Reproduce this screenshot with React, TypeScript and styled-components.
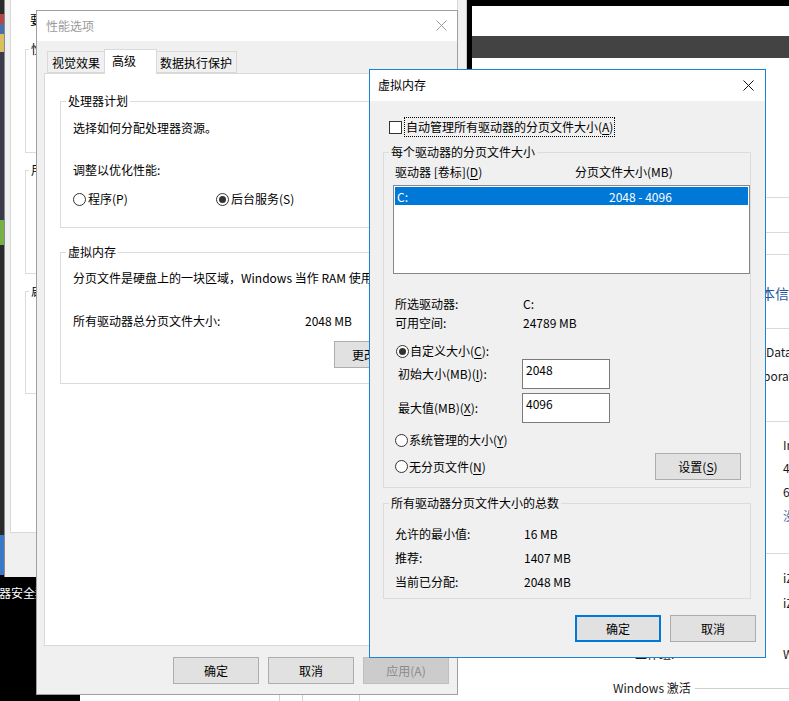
import styled, { createGlobalStyle } from 'styled-components'

const CloseIcon = ({ color }: { color: string }) => (
  <svg width="11" height="11" viewBox="0 0 11 11">
    <path d="M0.5 0.5 L10.5 10.5 M10.5 0.5 L0.5 10.5" stroke={color} strokeWidth="1" fill="none" />
  </svg>
)

const App = () => {
  return (
    <>
      <GlobalStyle />
      <Desktop>
        <ColorStrip />
        <DesktopLabel>器安全翔</DesktopLabel>

        {/* system properties window, mostly hidden */}
        <SysWindow>
          <SysPanel>
            <Line $mt={12} $indent={5}>要进行大多数更改，你必须作为管理员登录。</Line>
            <Group $bg="#fff" $pad="0 12px 95px" $mt={21}>
              <Legend $shift={-9}>性能</Legend>
            </Group>
            <Group $bg="#fff" $pad="0 12px 95px" $mt={17}>
              <Legend $shift={-9}>用户配置文件</Legend>
            </Group>
            <Group $bg="#fff" $pad="0 12px 94px" $mt={17}>
              <Legend $shift={-9}>启动和故障恢复</Legend>
            </Group>
          </SysPanel>
        </SysWindow>

        <BackWindow>
          <BackCell $w={200} />
          <BackCell $w={23} />
          <BackCell $w={57} />
        </BackWindow>

        {/* control panel "system" window */}
        <CpWindow>
          <CpBlackBar />
          <CpBlank />
          <CpDarkBar />
          <CpMain>
            <Sep $mt={139} />
            <Sep $mt={34} />
            <Sep $mt={21} />
            <CpHeading $mt={28} $indent={134}>基本信息</CpHeading>
            <Sep $mt={25} />
            <CpText $mt={15} $indent={153}>Datacenter</CpText>
            <CpText $mt={8} $indent={150}>poration。保留所有权利。</CpText>
            <Sep $mt={37} />
            <CpText $mt={15} $indent={22}>
              <Cell $w={148}>处理器:</Cell>Intel(R) Xeon(R) CPU E5-2682 v4 @ 2.50GHz
            </CpText>
            <CpText $mt={7} $indent={22}>
              <Cell $w={148}>已安装的内存(RAM):</Cell>4.00 GB
            </CpText>
            <CpText $mt={8} $indent={22}>
              <Cell $w={148}>系统类型:</Cell>64 位操作系统，基于 x64 的处理器
            </CpText>
            <CpText $mt={8} $indent={22} $muted>
              <Cell $w={148}>笔和触控:</Cell>没有可用于此显示器的笔或触控输入
            </CpText>
            <Sep $mt={29} />
            <CpText $mt={16} $indent={22}>
              <Cell $w={148}>计算机名:</Cell>iZ8vb5k2r1q9Z
            </CpText>
            <CpText $mt={9} $indent={22}>
              <Cell $w={148}>计算机全名:</Cell>iZ8vb5k2r1q9Z
            </CpText>
            <CpText $mt={35} $indent={22}>
              <Cell $w={148}>工作组:</Cell>WORKGROUP
            </CpText>
            <SectionTitle $mt={18}>
              Windows 激活
              <SectionRule />
            </SectionTitle>
          </CpMain>
        </CpWindow>

        {/* 性能选项 */}
        <PerfDialog>
          <TitleBar $h={30} $pl={9} $pr={10}>
            <TitleText $dim>性能选项</TitleText>
            <CloseIcon color="#9a9a9a" />
          </TitleBar>
          <PerfBody>
            <TabStrip>
              <Tab $w={58} $pl={4}>视觉效果</Tab>
              <Tab $w={53} $pl={7} $active>高级</Tab>
              <Tab $w={81} $pl={3}>数据执行保护</Tab>
            </TabStrip>
            <TabPanel>
              <Group $bg="#fff" $pad="0 12px 20px">
                <Legend $shift={-7}>处理器计划</Legend>
                <Line $mt={11}>选择如何分配处理器资源。</Line>
                <Line $mt={26}>调整以优化性能:</Line>
                <Line $mt={13}>
                  <Choice $w={143} $gap={2}>
                    <Radio />
                    <Caption>程序(P)</Caption>
                  </Choice>
                  <Choice $gap={2}>
                    <Radio $checked />
                    <Caption>后台服务(S)</Caption>
                  </Choice>
                </Line>
              </Group>
              <Group $bg="#fff" $pad="0 12px 15px" $mt={24}>
                <Legend $shift={-7}>虚拟内存</Legend>
                <Line $mt={10}>分页文件是硬盘上的一块区域，Windows 当作 RAM 使用它。</Line>
                <Line $mt={27}>
                  <Cell $w={232}>所有驱动器总分页文件大小:</Cell>2048 MB
                </Line>
                <ButtonRow $mt={12}>
                  <Button>更改(C)...</Button>
                </ButtonRow>
              </Group>
            </TabPanel>
            <ButtonRow $mt={11}>
              <Button>确定</Button>
              <Button>取消</Button>
              <Button $disabled>应用(A)</Button>
            </ButtonRow>
          </PerfBody>
        </PerfDialog>

        {/* 虚拟内存 */}
        <VmDialog>
          <TitleBar $h={31} $pl={8} $pr={11}>
            <TitleText>虚拟内存</TitleText>
            <CloseIcon color="#111" />
          </TitleBar>
          <VmBody>
            <AutoRow>
              <CheckBox />
              <FocusLabel>
                自动管理所有驱动器的分页文件大小(<u>A</u>)
              </FocusLabel>
            </AutoRow>

            <Group $bg="#f0f0f0" $pad="0 0 7px 11px" $mt={15} $mr={5}>
              <Legend $shift={-6}>每个驱动器的分页文件大小</Legend>
              <Line $mt={4}>
                <Cell $w={180}>
                  驱动器 [卷标](<u>D</u>)
                </Cell>
                分页文件大小(MB)
              </Line>
              <DriveList>
                <DriveRow>
                  <Cell $w={212}>C:</Cell>
                  2048 - 4096
                </DriveRow>
              </DriveList>
              <Line $mt={22}>
                <Cell $w={128}>所选驱动器:</Cell>C:
              </Line>
              <Line $mt={3}>
                <Cell $w={128}>可用空间:</Cell>24789 MB
              </Line>
              <Line $mt={12} $indent={1}>
                <Choice $gap={1}>
                  <Radio $checked />
                  <Caption>
                    自定义大小(<u>C</u>):
                  </Caption>
                </Choice>
              </Line>
              <Line $indent={3}>
                <Cell $w={124}>
                  初始大小(MB)(<u>I</u>):
                </Cell>
                <SizeBox>2048</SizeBox>
              </Line>
              <Line $mt={4} $indent={3}>
                <Cell $w={124}>
                  最大值(MB)(<u>X</u>):
                </Cell>
                <SizeBox>4096</SizeBox>
              </Line>
              <Line $mt={9}>
                <Choice $gap={1}>
                  <Radio />
                  <Caption>
                    系统管理的大小(<u>Y</u>)
                  </Caption>
                </Choice>
              </Line>
              <SplitRow $mt={5}>
                <Choice $gap={1}>
                  <Radio />
                  <Caption>
                    无分页文件(<u>N</u>)
                  </Caption>
                </Choice>
                <Button>
                  <Caption>
                    设置(<u>S</u>)
                  </Caption>
                </Button>
              </SplitRow>
            </Group>

            <Group $bg="#f0f0f0" $pad="0 0 5px 11px" $mt={15} $mr={5}>
              <Legend $shift={-6}>所有驱动器分页文件大小的总数</Legend>
              <TotalRow $mt={10}>
                <Cell $w={129}>允许的最小值:</Cell>16 MB
              </TotalRow>
              <TotalRow>
                <Cell $w={129}>推荐:</Cell>1407 MB
              </TotalRow>
              <TotalRow>
                <Cell $w={129}>当前已分配:</Cell>2048 MB
              </TotalRow>
            </Group>

            <ButtonRow $mt={16}>
              <Button $focus>确定</Button>
              <Button>取消</Button>
            </ButtonRow>
          </VmBody>
        </VmDialog>
      </Desktop>
    </>
  )
}

const GlobalStyle = createGlobalStyle`
  * { box-sizing: border-box; }
  html, body { margin: 0; padding: 0; background: #000; }
  body {
    font-family: "Noto Sans CJK SC", "Microsoft YaHei", sans-serif;
    font-size: 12px;
    color: #000;
  }
  u { text-underline-offset: 2px; }
`

const Desktop = styled.div`
  position: relative;
  width: 789px;
  height: 701px;
  overflow: hidden;
  background: #000;
`

const ColorStrip = styled.div`
  position: absolute;
  left: 0;
  top: 0;
  width: 4px;
  height: 580px;
  background: linear-gradient(
    to bottom,
    #2a2a2a 0 14px,
    #b04848 14px 24px,
    #4a6fb0 24px 34px,
    #d8c060 34px 52px,
    #3a3a4a 52px 220px,
    #78b048 220px 245px,
    #2a2a2a 245px 535px,
    #3a78c8 535px 575px,
    #000 575px
  );
`

const DesktopLabel = styled.div`
  position: absolute;
  left: -1px;
  top: 585px;
  color: #fff;
  line-height: 16px;
  white-space: nowrap;
`

const SysWindow = styled.div`
  position: absolute;
  left: 4px;
  top: 0;
  width: 463px;
  height: 577px;
  background: #f0f0f0;
  border-left: 1px solid #8a8a8a;
  border-right: 1px solid #c8c8c8;
  padding: 0 8px 0 5px;
`

const SysPanel = styled.div`
  height: 533px;
  background: #fff;
  border: 1px solid #d9d9d9;
  border-top: none;
  padding-left: 14px;
  display: flex;
  flex-direction: column;
`

const BackWindow = styled.div`
  position: absolute;
  left: 80px;
  top: 600px;
  width: 392px;
  height: 101px;
  background: #fff;
  display: flex;
`

const BackCell = styled.div<{ $w: number }>`
  width: ${({ $w }) => $w}px;
  border-right: 1px solid #d0d0d0;
`

const CpWindow = styled.div`
  position: absolute;
  left: 472px;
  top: 0;
  width: 330px;
  height: 701px;
  background: #fff;
  display: flex;
  flex-direction: column;
`

const CpBlackBar = styled.div`
  height: 6px;
  background: #000;
`

const CpBlank = styled.div`
  height: 30px;
  background: #fff;
`

const CpDarkBar = styled.div`
  height: 22px;
  background: #434343;
`

const CpMain = styled.div`
  padding-left: 141px;
  display: flex;
  flex-direction: column;
`

const Sep = styled.div<{ $mt: number }>`
  margin-top: ${({ $mt }) => $mt}px;
  height: 1px;
  background: #dadada;
`

const CpHeading = styled.div<{ $mt: number; $indent: number }>`
  margin-top: ${({ $mt }) => $mt}px;
  margin-left: ${({ $indent }) => $indent}px;
  font-size: 14px;
  line-height: 20px;
  color: #1f56a0;
  white-space: nowrap;
`

const CpText = styled.div<{ $mt: number; $indent: number; $muted?: boolean }>`
  margin-top: ${({ $mt }) => $mt}px;
  margin-left: ${({ $indent }) => $indent}px;
  display: flex;
  line-height: 16px;
  white-space: nowrap;
  color: ${({ $muted }) => ($muted ? '#3a6ea5' : '#1a1a1a')};
`

const SectionTitle = styled.div<{ $mt: number }>`
  margin-top: ${({ $mt }) => $mt}px;
  display: flex;
  align-items: center;
  line-height: 16px;
  white-space: nowrap;
  color: #1a1a1a;
`

const SectionRule = styled.span`
  flex: 1;
  height: 1px;
  margin: 1px 0 0 4px;
  background: #d0d0d0;
`

const PerfDialog = styled.div`
  position: absolute;
  left: 36px;
  top: 10px;
  width: 422px;
  height: 685px;
  border: 1px solid #a0a0a0;
  display: flex;
  flex-direction: column;
  background: #f0f0f0;
`

const VmDialog = styled.div`
  position: absolute;
  left: 369px;
  top: 69px;
  width: 397px;
  height: 589px;
  border: 1px solid #1883d7;
  display: flex;
  flex-direction: column;
  background: #f0f0f0;
`

const TitleBar = styled.div<{ $h: number; $pl: number; $pr: number }>`
  height: ${({ $h }) => $h}px;
  flex: none;
  background: #fff;
  display: flex;
  align-items: center;
  justify-content: space-between;
  padding: 0 ${({ $pr }) => $pr}px 1px ${({ $pl }) => $pl}px;
`

const TitleText = styled.span<{ $dim?: boolean }>`
  color: ${({ $dim }) => ($dim ? '#9a9a9a' : '#000')};
  line-height: 16px;
`

const PerfBody = styled.div`
  flex: 1;
  display: flex;
  flex-direction: column;
  padding: 8px 8px 10px 7px;
`

const TabStrip = styled.div`
  height: 25px;
  margin-bottom: -1px;
  padding-left: 3px;
  display: flex;
  align-items: flex-end;
`

const Tab = styled.div<{ $w: number; $pl: number; $active?: boolean }>`
  width: ${({ $w }) => $w}px;
  height: ${({ $active }) => ($active ? 25 : 22)}px;
  margin-bottom: ${({ $active }) => ($active ? 0 : 1)}px;
  margin-left: -1px;
  padding-left: ${({ $pl }) => $pl}px;
  padding-bottom: ${({ $active }) => ($active ? 4 : 0)}px;
  border: 1px solid #d9d9d9;
  border-bottom: ${({ $active }) => ($active ? 'none' : '1px solid #d9d9d9')};
  background: ${({ $active }) => ($active ? '#fff' : '#f0f0f0')};
  display: flex;
  align-items: center;
  white-space: nowrap;
  position: relative;
  z-index: ${({ $active }) => ($active ? 1 : 0)};

  &:first-child {
    margin-left: 0;
  }
`

const TabPanel = styled.div`
  flex: 1;
  background: #fff;
  border: 1px solid #d9d9d9;
  padding: 27px 15px 0;
  display: flex;
  flex-direction: column;
`

const Group = styled.div<{ $bg: string; $pad: string; $mt?: number; $mr?: number }>`
  margin-top: ${({ $mt }) => $mt ?? 0}px;
  margin-right: ${({ $mr }) => $mr ?? 0}px;
  border: 1px solid #dcdcdc;
  background: ${({ $bg }) => $bg};
  padding: ${({ $pad }) => $pad};
  display: flex;
  flex-direction: column;
`

const Legend = styled.div<{ $shift: number }>`
  align-self: flex-start;
  margin: -9px 0 0 ${({ $shift }) => $shift}px;
  padding: 0 2px;
  line-height: 16px;
  background: inherit;
  white-space: nowrap;
`

const Line = styled.div<{ $mt?: number; $indent?: number }>`
  margin-top: ${({ $mt }) => $mt ?? 0}px;
  margin-left: ${({ $indent }) => $indent ?? 0}px;
  display: flex;
  align-items: center;
  line-height: 16px;
  white-space: nowrap;
`

const SplitRow = styled.div<{ $mt: number }>`
  margin: ${({ $mt }) => $mt}px 9px 0 0;
  display: flex;
  align-items: center;
  justify-content: space-between;
  line-height: 16px;
  white-space: nowrap;
`

const TotalRow = styled.div<{ $mt?: number }>`
  margin-top: ${({ $mt }) => $mt ?? 0}px;
  height: 24px;
  display: flex;
  align-items: center;
  white-space: nowrap;
`

const Cell = styled.span<{ $w: number }>`
  width: ${({ $w }) => $w}px;
  flex: none;
  white-space: nowrap;
`

const Caption = styled.span`
  white-space: nowrap;
  line-height: 16px;
`

const Choice = styled.span<{ $w?: number; $gap: number }>`
  display: inline-flex;
  align-items: center;
  gap: ${({ $gap }) => $gap}px;
  width: ${({ $w }) => ($w ? `${$w}px` : 'auto')};
  flex: none;
`

const Radio = styled.span<{ $checked?: boolean }>`
  width: 13px;
  height: 13px;
  flex: none;
  border: 1px solid #333;
  border-radius: 50%;
  background: #fff;
  display: inline-flex;
  align-items: center;
  justify-content: center;

  &::after {
    content: '';
    width: 7px;
    height: 7px;
    border-radius: 50%;
    background: ${({ $checked }) => ($checked ? '#333' : 'transparent')};
  }
`

const VmBody = styled.div`
  flex: 1;
  display: flex;
  flex-direction: column;
  padding: 16px 9px 15px 13px;
`

const AutoRow = styled.div`
  height: 20px;
  margin-left: 6px;
  display: flex;
  align-items: center;
  gap: 2px;
`

const CheckBox = styled.span`
  width: 13px;
  height: 13px;
  flex: none;
  border: 1px solid #333;
  background: #fff;
`

const FocusLabel = styled.span`
  height: 20px;
  padding: 0 1px;
  border: 1px dotted #000;
  line-height: 18px;
  white-space: nowrap;
`

const DriveList = styled.div`
  margin: 5px 0 0 -2px;
  height: 89px;
  border: 1px solid #828790;
  background: #fff;
  padding: 1px;
`

const DriveRow = styled.div`
  height: 18px;
  padding-left: 2px;
  display: flex;
  align-items: center;
  background: #0078d7;
  color: #fff;
  white-space: nowrap;
`

const SizeBox = styled.div`
  width: 88px;
  height: 30px;
  border: 1px solid #7a7a7a;
  background: #fff;
  padding: 2px 0 0 3px;
  line-height: 16px;
`

const ButtonRow = styled.div<{ $mt: number }>`
  margin-top: ${({ $mt }) => $mt}px;
  display: flex;
  justify-content: flex-end;
  gap: 9px;
`

const Button = styled.div<{ $focus?: boolean; $disabled?: boolean }>`
  width: 86px;
  height: 27px;
  flex: none;
  display: flex;
  align-items: center;
  justify-content: center;
  white-space: nowrap;
  background: ${({ $disabled }) => ($disabled ? '#cccccc' : '#e1e1e1')};
  border: 1px solid
    ${({ $focus, $disabled }) => ($focus ? '#0078d7' : $disabled ? '#bfbfbf' : '#adadad')};
  box-shadow: ${({ $focus }) => ($focus ? 'inset 0 0 0 1px #0078d7' : 'none')};
  color: ${({ $disabled }) => ($disabled ? '#8a8a8a' : '#000')};
`

export default App
